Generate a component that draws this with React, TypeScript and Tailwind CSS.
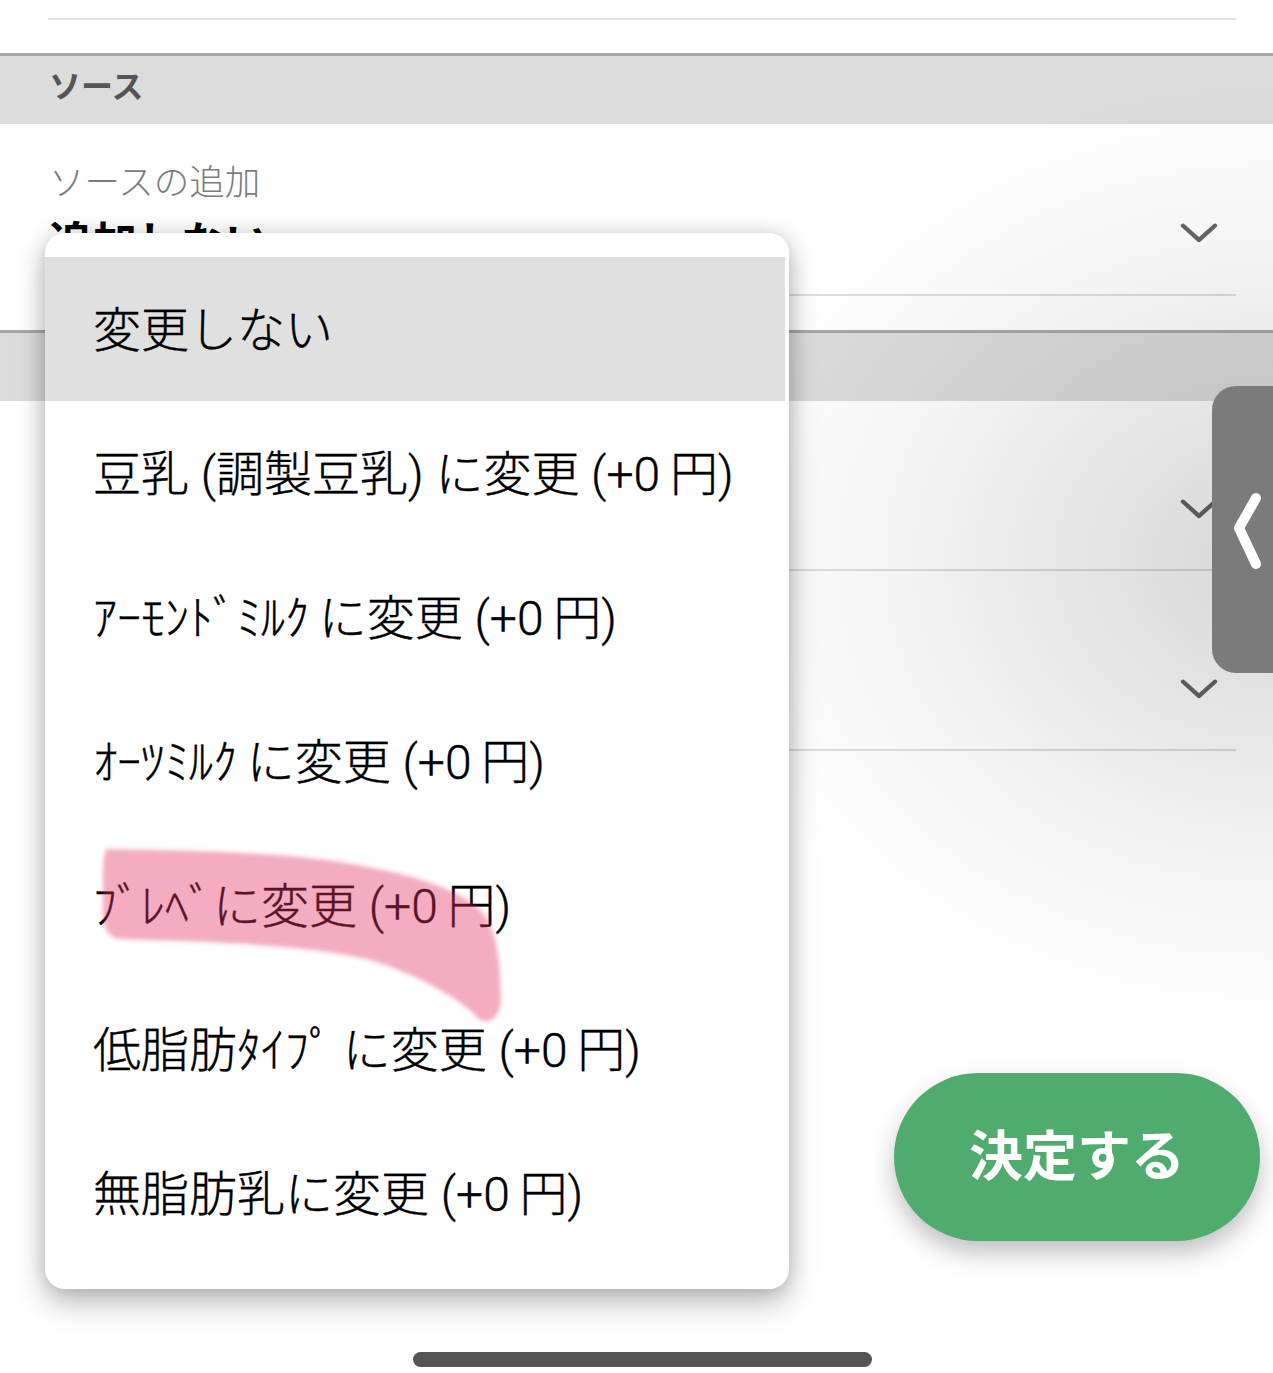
import React from 'react';

const fontStack = "font-['Roboto','Noto_Sans_CJK_JP',sans-serif]";

const options = [
  '変更しない',
  '豆乳 (調製豆乳) に変更 (+0\u2009円)',
  'ｱｰﾓﾝﾄﾞﾐﾙｸ\u2009に変更 (+0\u2009円)',
  'ｵｰﾂﾐﾙｸ\u2009に変更 (+0\u2009円)',
  'ﾌﾞﾚﾍﾞに変更 (+0\u2009円)',
  '低脂肪ﾀｲﾌﾟ\u2009に変更 (+0\u2009円)',
  '無脂肪乳に変更 (+0\u2009円)',
];

const Chevron: React.FC = () => (
  <svg width="38" height="24" viewBox="0 0 38 24" fill="none" className="shrink-0">
    <path d="M3 4 L19 20 L35 4" stroke="#666" strokeWidth="4.5" strokeLinecap="round" strokeLinejoin="round" transform="matrix(1 0 0 .9 0 1)" />
  </svg>
);

const SectionHeader: React.FC<{ title?: string }> = ({ title }) => (
  <div className="flex h-[71px] items-center border-t-[3px] border-[#a8a8a8] bg-[#dcdcdc] px-[49px] pb-[6px]">
    <span className="text-[32px] font-bold leading-none text-[#555]">{title}</span>
  </div>
);

const Field: React.FC<{ label?: string; value?: string; height: string; chevronPad: string }> = ({
  label,
  value,
  height,
  chevronPad,
}) => (
  <div className={`ml-12 mr-[37px] flex items-start justify-between border-b-2 border-[#dedede] ${height}`}>
    <div className="pt-[38px] pl-[1px]">
      <div className="text-[35.5px] font-light leading-[42px] text-[#7c7c7c]">{label}</div>
      <div className="mt-[14px] text-[44px] font-bold leading-[52px] text-black">{value}</div>
    </div>
    <div className={`pr-[18px] ${chevronPad}`}>
      <Chevron />
    </div>
  </div>
);

export default function App() {
  return (
    <div className={`relative h-[1373px] w-[1273px] overflow-hidden bg-white ${fontStack}`}>
      <div className="ml-12 mr-[37px] h-[20px] border-b-2 border-[#e2e2e2]" />
      <div className="h-[33px]" />
      <SectionHeader title="ソース" />
      <Field label="ソースの追加" value="追加しない" height="h-[172px]" chevronPad="pt-[97px]" />
      <div className="h-[34px]" />
      <SectionHeader />
      <Field height="h-[170px]" chevronPad="pt-[96px]" />
      <Field height="h-[180px]" chevronPad="pt-[106px]" />

      {/* side panel shadow falling across the page */}
      <div className="pointer-events-none absolute inset-0 bg-[radial-gradient(ellipse_580px_480px_at_1273px_560px,rgba(0,0,0,0.16),rgba(0,0,0,0.09)_40%,rgba(0,0,0,0.04)_68%,rgba(0,0,0,0)_100%)]" />

      <div className="absolute left-[1212px] top-[386px] flex h-[287px] w-[61px] items-center justify-center rounded-l-[24px] bg-[#7b7b7b]">
        <svg width="32" height="80" viewBox="0 0 32 80" fill="none" className="ml-[9px] mt-[4px]">
          <path d="M25 6 L8 36 L25 72" stroke="#fff" strokeWidth="10" strokeLinecap="round" strokeLinejoin="round" />
        </svg>
      </div>

      <div className="absolute left-[45px] top-[233px] h-[1056px] w-[744px] rounded-[20px] bg-white py-6 shadow-[0_14px_30px_rgba(0,0,0,0.26),0_0_20px_rgba(0,0,0,0.14)]">
        {options.map((opt, i) => (
          <div
            key={opt}
            className={`mr-1 flex h-[144px] items-center pl-[48px] pt-[3px] text-[48px] font-light text-black [-webkit-text-stroke:0.4px_black] ${i === 0 ? 'bg-[#e0e0e0]' : ''}`}
          >
            {opt}
          </div>
        ))}
      </div>

      {/* marker scribble */}
      <svg className="absolute left-0 top-0" width="1273" height="1373" fill="none">
        <defs>
          <filter id="soft">
            <feGaussianBlur stdDeviation="2.2" />
          </filter>
        </defs>
        <path
          d="M106 849 C170 850 280 852 340 862 C400 872 450 884 478 908 C495 924 500 950 501 1000 C500 1018 490 1024 480 1020 C462 1000 420 975 370 960 C310 945 220 942 118 939 C106 936 102 925 103 905 C103 880 102 860 106 849 Z"
          fill="rgb(225,50,95)"
          fillOpacity="0.4"
          filter="url(#soft)"
        />
      </svg>

      <button className="absolute left-[894px] top-[1073px] flex h-[168px] w-[366px] items-center justify-center rounded-full bg-[#4fac6e] text-[54px] font-bold text-white shadow-[0_12px_24px_rgba(0,0,0,0.25)]">
        決定する
      </button>

      <div className="absolute left-[413px] top-[1352px] h-[15px] w-[459px] rounded-full bg-[#555]" />
    </div>
  );
}
